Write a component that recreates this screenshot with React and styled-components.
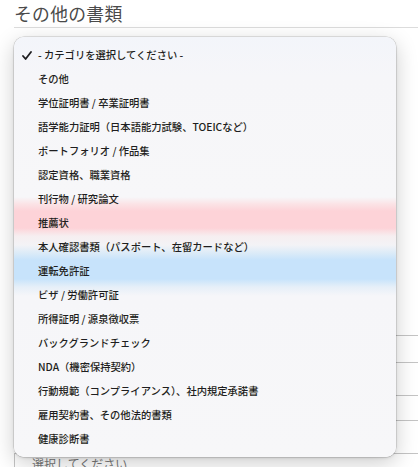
import React from "react";
import styled, { createGlobalStyle } from "styled-components";

const Global = createGlobalStyle`
  html, body { margin: 0; padding: 0; background: #fff; }
  body { font-family: "Noto Sans CJK JP", "Noto Sans", sans-serif; overflow: hidden; }
`;

const Page = styled.div`
  position: relative;
  width: 418px;
  height: 467px;
  overflow: hidden;
  padding-left: 14px;
  box-sizing: border-box;
`;

const Title = styled.h2`
  margin: 0;
  padding-top: 1px;
  height: 26px;
  font-size: 17.8px;
  font-weight: 400;
  line-height: 24px;
  color: #4a4a4a;
  letter-spacing: 0.3px;
  border-bottom: 1px solid #dcdcdc;
`;

const Form = styled.div`
  display: flex;
  flex-direction: column;
  padding-top: 307px;
`;

const Field = styled.div`
  height: ${(p) => p.$h}px;
  margin-bottom: ${(p) => p.$mb}px;
  border: 1px solid #c4c4c4;
  border-right: none;
  box-sizing: border-box;
  font-size: 12px;
  color: #777;
  padding-left: 17px;
  line-height: 20px;
`;

const Menu = styled.div`
  position: absolute;
  left: 14px;
  top: 37px;
  width: 382px;
  height: 420px;
  border-radius: 10px;
  box-sizing: border-box;
  padding: 6px 0;
  background: linear-gradient(
    to bottom,
    #f3f5fa 0px,
    #f6f6f9 40px,
    #f7f7f9 160px,
    #fbe3e6 167px,
    #fdd3d8 174px,
    #fdd3d8 191px,
    #f6eef0 199px,
    #f3f3f6 208px,
    #dcebf8 216px,
    #c7e3fb 223px,
    #c7e3fb 242px,
    #e6eff8 250px,
    #f6f6f9 259px,
    #f7f7f9 100%
  );
  box-shadow: 0 0 0 0.5px rgba(0, 0, 0, 0.18), 0 6px 22px rgba(0, 0, 0, 0.2),
    0 1px 3px rgba(0, 0, 0, 0.12);
`;

const Item = styled.div`
  position: relative;
  height: 24px;
  line-height: 24px;
  padding-left: 24px;
  font-size: 10.3px;
  font-weight: 500;
  color: #1e1e20;
  white-space: nowrap;
`;

const Check = styled.svg`
  position: absolute;
  left: 8px;
  top: 8px;
`;

const items = [
  "- カテゴリを選択してください -",
  "その他",
  "学位証明書 / 卒業証明書",
  "語学能力証明（日本語能力試験、TOEICなど）",
  "ポートフォリオ / 作品集",
  "認定資格、職業資格",
  "刊行物 / 研究論文",
  "推薦状",
  "本人確認書類（パスポート、在留カードなど）",
  "運転免許証",
  "ビザ / 労働許可証",
  "所得証明 / 源泉徴収票",
  "バックグランドチェック",
  "NDA（機密保持契約）",
  "行動規範（コンプライアンス）、社内規定承諾書",
  "雇用契約書、その他法的書類",
  "健康診断書",
];

export default function App() {
  return (
    <>
      <Global />
      <Page>
        <Title>その他の書類</Title>
        <Form>
          <Field $h={28} $mb={32} />
          <Field $h={26} $mb={32} />
          <Field $h={30} $mb={0}>選択してください</Field>
        </Form>
        <Menu>
          {items.map((t, i) => (
            <Item key={i}>
              {i === 0 && (
                <Check width="10" height="9" viewBox="0 0 10 9">
                  <path
                    d="M1 5 L3.6 8 L9 1"
                    fill="none"
                    stroke="#1e1e20"
                    strokeWidth="1.8"
                    strokeLinecap="round"
                    strokeLinejoin="round"
                  />
                </Check>
              )}
              {t}
            </Item>
          ))}
        </Menu>
      </Page>
    </>
  );
}
